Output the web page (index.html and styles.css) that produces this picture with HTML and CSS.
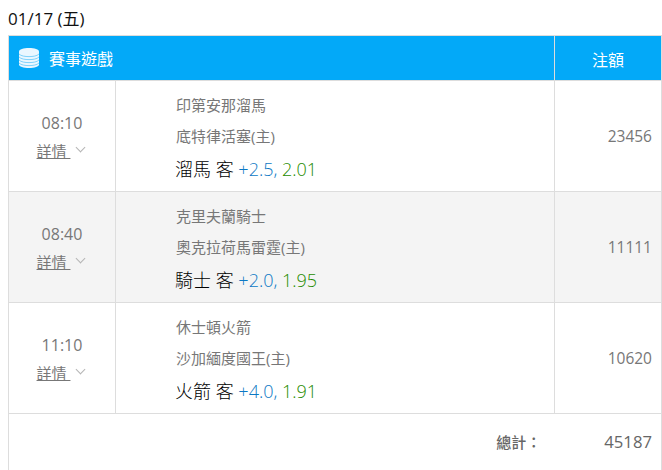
FILE: index.html
```html
<!DOCTYPE html>
<html lang="zh-Hant">
<head>
<meta charset="utf-8">
<title>賽事遊戲</title>
<link rel="stylesheet" href="styles.css">
</head>
<body>
<div class="date">01/17 (五)</div>
<div class="board">
  <div class="head">
    <div class="head-title">
      <svg class="db" width="20" height="20" viewBox="0 0 20 20" aria-hidden="true">
        <path d="M0 3.500C0 1.500 4.500 0 10 0s10 1.500 10 3.500v13c0 2-4.500 3.500-10 3.500S0 18.500 0 16.500z" fill="#eaf7ff"/>
        <g fill="none" stroke="#7fd2fb" stroke-width="1">
          <path d="M0 6c2 2 6 2.600 10 2.600S18 8 20 6"/>
          <path d="M0 9c2 2 6 2.600 10 2.600S18 11 20 9"/>
          <path d="M0 12c2 2 6 2.600 10 2.600S18 14 20 12"/>
          <path d="M0 15c2 2 6 2.600 10 2.600S18 17 20 15"/>
        </g>
      </svg>
      <span>賽事遊戲</span>
    </div>
    <div class="head-amount">注額</div>
  </div>

  <div class="row">
    <div class="time"><div class="clock">08:10</div><div class="more"><a>詳情 </a><i class="chev"></i></div></div>
    <div class="game">
      <div class="team">印第安那溜馬</div>
      <div class="team">底特律活塞(主)</div>
      <div class="pick">溜馬 客 <span class="line">+2.5,</span> <span class="odds">2.01</span></div>
    </div>
    <div class="amount">23456</div>
  </div>

  <div class="row alt">
    <div class="time"><div class="clock">08:40</div><div class="more"><a>詳情 </a><i class="chev"></i></div></div>
    <div class="game">
      <div class="team">克里夫蘭騎士</div>
      <div class="team">奧克拉荷馬雷霆(主)</div>
      <div class="pick">騎士 客 <span class="line">+2.0,</span> <span class="odds">1.95</span></div>
    </div>
    <div class="amount">11111</div>
  </div>

  <div class="row">
    <div class="time"><div class="clock">11:10</div><div class="more"><a>詳情 </a><i class="chev"></i></div></div>
    <div class="game">
      <div class="team">休士頓火箭</div>
      <div class="team">沙加緬度國王(主)</div>
      <div class="pick">火箭 客 <span class="line">+4.0,</span> <span class="odds">1.91</span></div>
    </div>
    <div class="amount">10620</div>
  </div>

  <div class="total">
    <span class="total-label">總計：</span>
    <span class="total-value">45187</span>
  </div>
</div>
</body>
</html>
```
FILE: styles.css
```css
* { box-sizing: border-box; }
html, body { margin: 0; padding: 0; overflow: hidden; }
body {
  width: 662px;
  height: 470px;
  padding: 8px 0 0 8px;
  background: #fff;
  font-family: "Open Sans", "Noto Sans CJK TC", sans-serif;
  font-weight: 300;
  color: #666;
}
.date {
  height: 27px;
  font-size: 17px;
  font-weight: 400;
  line-height: 21px;
  color: #111;
}
.board {
  width: 654px;
  border: 1px solid #ddd;
  border-bottom: 0;
}
.head {
  display: grid;
  grid-template-columns: 1fr 107px;
  height: 45px;
  background: #03a9f8;
  color: #fff;
  border-bottom: 1px solid #ddd;
}
.head-title {
  display: flex;
  align-items: center;
  gap: 10px;
  padding-left: 10px;
  font-size: 16px;
  font-weight: 400;
}
.head-amount {
  display: flex;
  align-items: center;
  justify-content: center;
  border-left: 1px solid #ddd;
  font-size: 16px;
  font-weight: 400;
  padding-top: 1px;
}
.row {
  display: grid;
  grid-template-columns: 107px 1fr 107px;
  height: 111px;
  border-bottom: 1px solid #ddd;
}
.alt { background: #f4f4f4; }
.time {
  display: flex;
  flex-direction: column;
  align-items: center;
  padding-top: 31px;
  border-right: 1px solid #ddd;
}
.clock {
  font-size: 16px;
  font-weight: 400;
  line-height: 22px;
  color: #777;
}
.more {
  display: flex;
  align-items: center;
  gap: 4px;
  height: 20px;
  margin: 6px 0 0;
  font-size: 15px;
  font-weight: 400;
  color: #777;
}
.more a { text-decoration: underline; white-space: pre; }
.chev {
  width: 7px;
  height: 7px;
  margin: -6px 3px 0 3px;
  border-right: 1px solid #b5b5b5;
  border-bottom: 1px solid #b5b5b5;
  transform: rotate(45deg);
}
.game { padding: 13px 0 0 60px; }
.team {
  height: 31px;
  font-size: 15px;
  font-weight: 400;
  line-height: 22px;
  color: #777;
}
.pick {
  margin-left: -1px;
  font-size: 18px;
  line-height: 26px;
  color: #000;
}
.line { color: #0b78c4; }
.odds { color: #1f8c00; }
.amount {
  display: flex;
  align-items: center;
  justify-content: flex-end;
  padding-right: 9px;
  border-left: 1px solid #ddd;
  font-size: 15.500px;
  font-weight: 400;
  color: #777;
}
.total {
  display: flex;
  justify-content: flex-end;
  align-items: center;
  height: 57px;
  padding: 0 9px 3px 0;
  font-size: 16.700px;
  font-weight: 500;
  color: #666;
}
.total-label { width: 108px; font-size: 15px; }
```
